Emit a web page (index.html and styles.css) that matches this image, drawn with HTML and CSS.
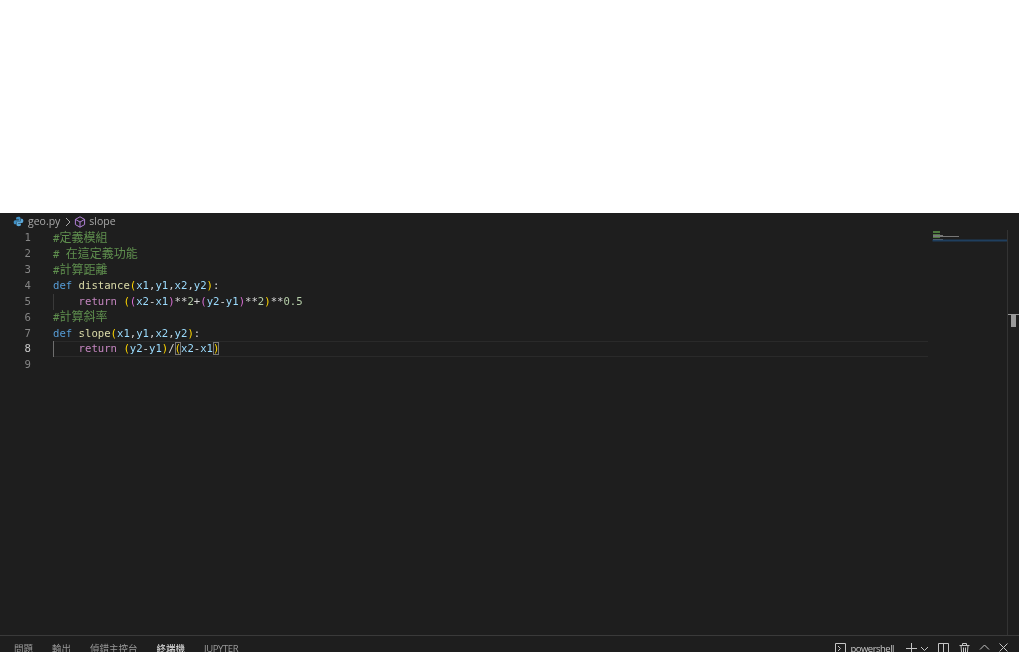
FILE: index.html
```html
<!DOCTYPE html>
<html lang="zh-Hant">
<head>
<meta charset="utf-8">
<title>geo.py</title>
<link rel="stylesheet" href="styles.css">
</head>
<body>
<div class="blank"></div>
<main class="window">
  <nav class="crumbs">
    <svg class="py" width="11" height="11" viewBox="0 0 16 16"><path fill="#3f8fc4" d="M8 1C5 1 4.500 2.200 4.500 3.500V5H8.500V6H3C1.500 6 1 7.500 1 9s.6 3 2 3h1.500v-2c0-1.200 1-2 2-2h3c1 0 1.500-.8 1.500-1.500v-3C11 2 10 1 8 1z"/><path fill="#5aa7d8" d="M8 15c3 0 3.500-1.200 3.500-2.500V11H7.500v-1H13c1.500 0 2-1.500 2-3s-.6-3-2-3h-1.500v2c0 1.200-1 2-2 2h-3C5.500 8 5 8.800 5 9.500v3C5 14 6 15 8 15z"/></svg>
    <span class="crumb">geo.py</span>
    <svg class="chev" width="10" height="10" viewBox="0 0 10 10"><path d="M3 1l4 4-4 4" fill="none" stroke="#a8a8a8" stroke-width="1"/></svg>
    <svg class="cube" width="12" height="12" viewBox="0 0 12 12"><path d="M6 .8l4.600 2.600v5.200L6 11.200 1.400 8.600V3.400zM1.400 3.400L6 6l4.600-2.600M6 6v5.200" fill="none" stroke="#b180d7" stroke-width="1"/></svg>
    <span class="crumb">slope</span>
  </nav>
  <section class="editor">
    <div class="code">
      <div class="line"><span class="num">1</span><span class="c">#<span class="cjk">定義模組</span></span></div>
      <div class="line"><span class="num">2</span><span class="c"># <span class="cjk">在這定義功能</span></span></div>
      <div class="line"><span class="num">3</span><span class="c">#<span class="cjk">計算距離</span></span></div>
      <div class="line"><span class="num">4</span><span><span class="k">def</span> <span class="f">distance</span><span class="y">(</span><span class="v">x1</span>,<span class="v">y1</span>,<span class="v">x2</span>,<span class="v">y2</span><span class="y">)</span>:</span></div>
      <div class="line"><span class="num">5</span><span class="guide">    <span class="r">return</span> <span class="y">(</span><span class="p">(</span><span class="v">x2</span>-<span class="v">x1</span><span class="p">)</span>**<span class="n">2</span>+<span class="p">(</span><span class="v">y2</span>-<span class="v">y1</span><span class="p">)</span>**<span class="n">2</span><span class="y">)</span>**<span class="n">0.5</span></span></div>
      <div class="line"><span class="num">6</span><span class="c">#<span class="cjk">計算斜率</span></span></div>
      <div class="line"><span class="num">7</span><span><span class="k">def</span> <span class="f">slope</span><span class="y">(</span><span class="v">x1</span>,<span class="v">y1</span>,<span class="v">x2</span>,<span class="v">y2</span><span class="y">)</span>:</span></div>
      <div class="line"><span class="num on">8</span><span class="guide active">    <span class="r">return</span> <span class="y">(</span><span class="v">y2</span>-<span class="v">y1</span><span class="y">)</span>/<span class="y box">(</span><span class="v">x2</span>-<span class="v">x1</span><span class="y box">)</span></span></div>
      <div class="line"><span class="num">9</span></div>
    </div>
    <div class="minimap">
      <i class="mm g"></i><i class="mm g"></i><i class="mm g short"></i><i class="mm t"></i><i class="mm t wide"></i><i class="mm g short"></i><i class="mm t"></i><i class="mm t cur"></i>
    </div>
    <div class="ruler"><span class="tmark"></span></div>
  </section>
  <footer class="panel">
    <div class="tabs">
      <span class="tab">問題</span>
      <span class="tab">輸出</span>
      <span class="tab">偵錯主控台</span>
      <span class="tab active">終端機</span>
      <span class="tab latin">JUPYTER</span>
    </div>
    <div class="actions">
      <svg width="13" height="13" viewBox="0 0 13 13"><path d="M1.500 1.500h10v10h-10zM4 4l2.500 2.500L4 9" fill="none" stroke="#c5c5c5"/></svg>
      <span class="shell">powershell</span>
      <svg class="plus" width="13" height="13" viewBox="0 0 13 13"><path d="M6.500 1v11M1 6.500h11" stroke="#c5c5c5"/></svg>
      <svg class="down" width="9" height="9" viewBox="0 0 9 9"><path d="M1 3l3.500 3.500L8 3" fill="none" stroke="#c5c5c5"/></svg>
      <svg class="gap" width="13" height="13" viewBox="0 0 13 13"><path d="M1.500 1.500h10v10h-10zM6.500 1.500v10" fill="none" stroke="#c5c5c5"/></svg>
      <svg class="gap" width="13" height="13" viewBox="0 0 13 13"><path d="M1.500 3.500h10M4.500 3.500v-2h4v2M3 3.500l.7 8.500h5.600l.7-8.500M5.500 5.500v5M7.500 5.500v5" fill="none" stroke="#c5c5c5"/></svg>
      <svg class="gap" width="11" height="11" viewBox="0 0 11 11"><path d="M1 7.500l4.500-4.500L10 7.500" fill="none" stroke="#c5c5c5"/></svg>
      <svg class="gap" width="11" height="11" viewBox="0 0 11 11"><path d="M1.500 1.500l8 8M9.500 1.500l-8 8" fill="none" stroke="#c5c5c5"/></svg>
    </div>
  </footer>
</main>
</body>
</html>
```

FILE: styles.css
```css
html, body {
  margin: 0;
  padding: 0;
  height: 652px;
  overflow: hidden;
  background: #fff;
}
body {
  display: flex;
  flex-direction: column;
  font-family: "Open Sans", "Noto Sans CJK TC", sans-serif;
}
.blank {
  height: 213px;
  flex: none;
}
.window {
  width: 1019px;
  height: 439px;
  background: #1e1e1e;
  display: flex;
  flex-direction: column;
  filter: blur(0.35px);
}
.crumbs {
  height: 17px;
  flex: none;
  display: flex;
  align-items: center;
  padding-left: 13px;
  font-size: 10.500px;
  color: #a9a9a9;
}
.crumb {
  line-height: 17px;
}
.py {
  margin-right: 4px;
}
.chev {
  margin: 0 1px 0 3px;
}
.cube {
  margin-right: 3px;
}
.editor {
  flex: 1;
  position: relative;
  min-height: 0;
}
.code {
  padding-top: 0.200px;
  font-family: "DejaVu Sans Mono", "Noto Sans CJK TC", monospace;
  font-size: 10.630px;
  color: #d4d4d4;
}
.line {
  height: 15.900px;
  line-height: 15.900px;
  display: flex;
  width: 928px;
  white-space: pre;
}
.num {
  width: 53px;
  flex: none;
  box-sizing: border-box;
  padding-right: 22px;
  text-align: right;
  color: #858585;
}
.num.on {
  color: #c6c6c6;
}
.cjk {
  font-size: 12px;
  line-height: 1;
}
.guide {
  box-shadow: inset 1px 0 #3a3a3a;
}
.guide.active {
  flex: 1;
  box-shadow: inset 1px 0 #6e6e6e, inset 0 1px #2a2a2a, inset 0 -1px #2a2a2a;
}
.c {
  padding-top: 0.800px;
  color: #5f8f4e;
}
.k { color: #569cd6; }
.f { color: #dcdcaa; }
.v { color: #9cdcfe; }
.r { color: #c586c0; }
.n { color: #b5cea8; }
.y { color: #ffd700; }
.p { color: #da70d6; }
.box {
  box-shadow: inset 0 0 0 1px #777;
}
.minimap {
  position: absolute;
  left: 933px;
  top: 1px;
  width: 74px;
  display: flex;
  flex-direction: column;
}
.mm {
  display: block;
  height: 1px;
  width: 10px;
  margin-bottom: 0.300px;
  background: #777;
}
.mm.g {
  width: 7px;
  background: #4e7a3e;
}
.mm.t.wide {
  width: 26px;
}
.mm.t.cur {
  width: 100%;
  background: #1f3f5f;
  box-shadow: 0 0 0 .5px #1f3f5f;
}
.ruler {
  position: absolute;
  left: 1007px;
  top: 0;
  bottom: 0;
  width: 12px;
  box-sizing: border-box;
  border-left: 1px solid #333;
}
.tmark {
  position: absolute;
  left: 0;
  top: 84px;
  width: 11px;
  height: 13px;
  background: linear-gradient(#999, #999) center top / 11px 1px no-repeat,
              linear-gradient(#999, #999) center top / 5px 13px no-repeat;
}
.panel {
  height: 17px;
  box-sizing: border-box;
  flex: none;
  border-top: 1px solid #3a3a3a;
  display: flex;
  justify-content: space-between;
  font-size: 9.500px;
  color: #9a9a9a;
  overflow: hidden;
}
.tabs {
  display: flex;
  gap: 19px;
  padding: 6px 0 0 14px;
  line-height: 14px;
}
.tab.active {
  color: #e7e7e7;
}
.tab.latin {
  letter-spacing: -0.400px;
}
.actions {
  display: flex;
  align-items: flex-start;
  padding: 6px 10px 0 0;
}
.actions svg {
  flex: none;
}
.shell {
  margin-left: 3px;
  line-height: 13px;
  color: #c5c5c5;
  letter-spacing: -0.500px;
}
.plus {
  margin-left: 11px;
}
.down {
  margin: 2px 0 0 2px;
}
.gap {
  margin-left: 8px;
}
```
